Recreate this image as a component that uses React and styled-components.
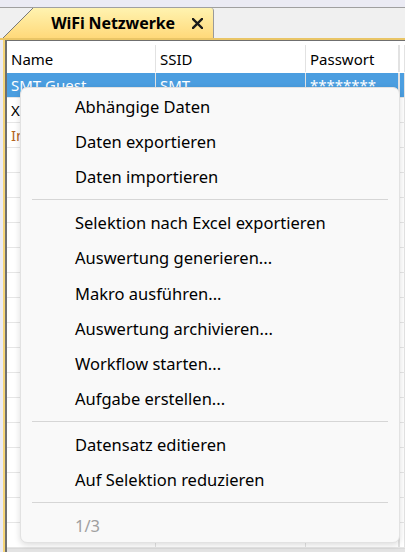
import React from 'react';
import styled, { createGlobalStyle } from 'styled-components';

const GlobalStyle = createGlobalStyle`
  html, body {
    margin: 0;
    padding: 0;
    background: #ebebf4;
    font-family: "Noto Sans", "Open Sans", sans-serif;
    overflow: hidden;
  }
`;

const Page = styled.div`
  position: relative;
  width: 405px;
  height: 552px;
  display: flex;
  flex-direction: column;
  padding-top: 7px;
  box-sizing: border-box;
`;

const TabStrip = styled.div`
  display: flex;
  align-items: flex-end;
  height: 33px;
  flex-shrink: 0;
  background: #f0f0f0;
  border-top: 1px solid #a0a0a0;
  border-bottom: 2px solid #e9c566;
  box-sizing: border-box;
`;

const Tab = styled.div`
  position: relative;
  margin-left: 3px;
  width: 211px;
  height: 30px;
  display: flex;
  align-items: center;
  justify-content: flex-end;
  gap: 17px;
  padding-right: 10px;
  box-sizing: border-box;
  background: linear-gradient(#fff3b0, #ffd97a);
  border-right: 1px solid #9a9a9a;
  border-top-right-radius: 3px;

  &::before {
    content: '';
    position: absolute;
    left: 0;
    top: 0;
    width: 30px;
    height: 30px;
    background: linear-gradient(
      to bottom right,
      #f0f0f0 0 calc(50% - 0.7px),
      #7a7a7a calc(50% - 0.7px) calc(50% + 0.5px),
      transparent calc(50% + 0.5px)
    );
  }
`;

const TabTitle = styled.span`
  font-size: 16px;
  font-weight: 700;
  color: #000;
  letter-spacing: -0.1px;
`;

const CloseIcon = () => (
  <svg width="11" height="11" viewBox="0 0 11 11">
    <path d="M1 1 L10 10 M10 1 L1 10" stroke="#1a1a1a" strokeWidth="2.4" strokeLinecap="square" />
  </svg>
);

const Frame = styled.div`
  flex: 1;
  display: flex;
  margin-left: 3px;
  border-left: 2px solid #f5d578;
  min-height: 0;
`;

const Grid = styled.div`
  flex: 1;
  display: flex;
  flex-direction: column;
  background: #fff;
  border-left: 2px solid #6f6f6f;
  border-top: 1px solid #6f6f6f;
  overflow: hidden;
`;

const Row = styled.div`
  display: grid;
  grid-template-columns: 149px 150px 94px 1fr;
  height: ${(p) => (p.$header ? 32 : 25)}px;
  flex-shrink: 0;
  padding-top: ${(p) => (p.$header ? 4 : 0)}px;
  background: ${(p) => (p.$selected ? '#4b9ee0' : '#fff')};
  border-bottom: 1px solid ${(p) => (p.$header ? '#fff' : '#e6e6e6')};
  box-sizing: border-box;
`;

const Cell = styled.div`
  display: flex;
  align-items: center;
  padding-left: 4px;
  font-size: 15px;
  white-space: nowrap;
  overflow: hidden;
  color: ${(p) => p.$color || '#000'};
  border-right: ${(p) => (p.$thick ? 2 : 1)}px solid #e2e2e2;
`;

const Footer = styled.div`
  height: 9px;
  margin-top: auto;
  flex-shrink: 0;
  background: #e3e3e3;
  border-top: 1px solid #dadada;
`;

const Menu = styled.div`
  position: absolute;
  left: 20px;
  top: 87px;
  width: 380px;
  height: 456px;
  box-sizing: border-box;
  padding: 1px 0 0;
  background: #f9f9f9;
  border: 1px solid #e2e2e2;
  border-radius: 7px;
  box-shadow: 0 2px 6px rgba(0, 0, 0, 0.14);
  display: flex;
  flex-direction: column;
`;

const MenuItem = styled.div`
  height: 35.2px;
  flex-shrink: 0;
  display: flex;
  align-items: center;
  padding-left: 54px;
  font-size: 16.5px;
  color: ${(p) => (p.$disabled ? '#a0a0a0' : '#000')};
`;

const Separator = styled.div`
  height: 10.5px;
  flex-shrink: 0;
  display: flex;
  align-items: center;
  padding: 0 11px;

  &::after {
    content: '';
    flex: 1;
    height: 1px;
    background: #d6d6d6;
  }
`;

const columns = ['Name', 'SSID', 'Passwort', ''];

const rows = [
  { cells: ['SMT Guest', 'SMT', '********', ''], selected: true },
  { cells: ['XSMT-Lager', 'XSMT', '********', ''] },
  { cells: ['Intern', 'SMT-Intern', '********', ''], color: '#b5651d' },
];

const menuGroups = [
  ['Abhängige Daten', 'Daten exportieren', 'Daten importieren'],
  [
    'Selektion nach Excel exportieren',
    'Auswertung generieren...',
    'Makro ausführen...',
    'Auswertung archivieren...',
    'Workflow starten...',
    'Aufgabe erstellen...',
  ],
  ['Datensatz editieren', 'Auf Selektion reduzieren'],
];

export default function App() {
  const emptyRows = Array.from({ length: 16 });

  return (
    <>
      <GlobalStyle />
      <Page>
        <TabStrip>
          <Tab>
            <TabTitle>WiFi Netzwerke</TabTitle>
            <CloseIcon />
          </Tab>
        </TabStrip>
        <Frame>
          <Grid>
            <Row $header>
              {columns.map((c, i) => (
                <Cell key={i} $thick={i === 2}>{c}</Cell>
              ))}
            </Row>
            {rows.map((r, i) => (
              <Row key={i} $selected={r.selected}>
                {r.cells.map((c, j) => (
                  <Cell key={j} $thick={j === 2} $color={r.selected ? '#fff' : r.color}>
                    {c}
                  </Cell>
                ))}
              </Row>
            ))}
            {emptyRows.map((_, i) => (
              <Row key={`e${i}`}>
                {columns.map((_, j) => (
                  <Cell key={j} $thick={j === 2} />
                ))}
              </Row>
            ))}
            <Footer />
          </Grid>
        </Frame>

        <Menu>
          {menuGroups.map((group, gi) => (
            <React.Fragment key={gi}>
              {group.map((label) => (
                <MenuItem key={label}>{label}</MenuItem>
              ))}
              <Separator />
            </React.Fragment>
          ))}
          <MenuItem $disabled>1/3</MenuItem>
        </Menu>
      </Page>
    </>
  );
}
